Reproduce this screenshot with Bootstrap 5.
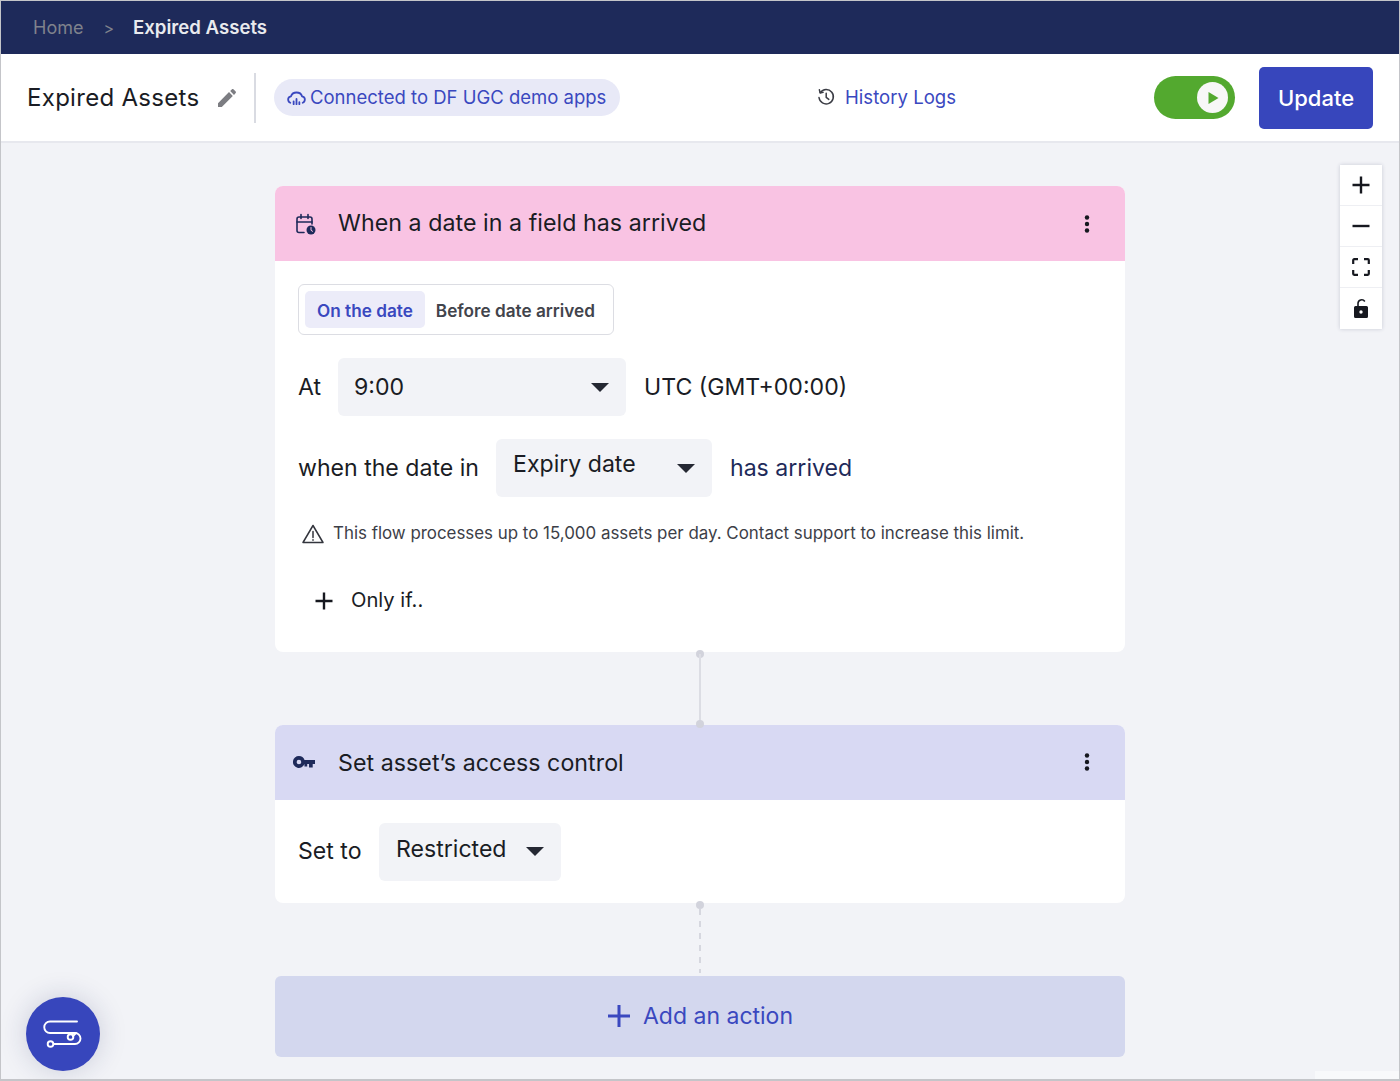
<!DOCTYPE html>
<html lang="en">
<head>
    <meta charset="UTF-8">
    <meta name="viewport" content="width=device-width, initial-scale=1.0">
    <title>Expired Assets</title>
    <link href="https://cdn.jsdelivr.net/npm/bootstrap@5.3.0/dist/css/bootstrap.min.css" rel="stylesheet">
    <style>
        html, body { height: 100%; overflow: hidden; }
        body { font-family: Inter, "Liberation Sans", sans-serif; background: #f2f3f7; color: #1a1c24; }

        .app-frame { position: relative; width: 1400px; height: 1081px; border: 1px solid #c4c5c9; border-bottom-width: 2px; background: #f2f3f7; overflow: hidden; }

        .crumb-bar { height: 53px; background: #1e2a5a; padding: 0 32px; font-size: 18px; }
        .crumb-home { color: #7f828c; }
        .crumb-sep { color: #7f828c; margin: 0 19px 0 20px; font-size: 16px; }
        .crumb-current { color: #e9eaee; font-weight: 600; font-size: 18.6px; }

        .head-bar { height: 89px; background: #fff; border-bottom: 2px solid #e7e8ee; padding-left: 26px; padding-right: 26px; }
        .flow-title { font-size: 24px; line-height: 1; letter-spacing: .3px; width: 184px; white-space: nowrap; padding-top: 1px; }
        .head-divider { width: 2px; height: 50px; background: #d9dbe2; margin: 0 18px 0 15px; }
        .conn-pill { height: 37px; width: 346px; border-radius: 19px; background: #e8e9f7; color: #3a48bf; font-size: 18.5px; padding-left: 13px; white-space: nowrap; }
        .hist-link { color: #3a48bf; font-size: 18.6px; margin-left: 196px; white-space: nowrap; }
        .play-toggle { width: 81px; height: 43px; border-radius: 22px; background: #53a92f; margin-left: auto; padding-right: 7px; }
        .play-knob { width: 31px; height: 31px; border-radius: 50%; background: #f7f7f7; }
        .update-btn { width: 114px; height: 62px; margin-left: 24px; padding-top: 8px; border-radius: 5px; background: #3746bc; border: 0; color: #fff; font-size: 22px; font-weight: 500; }
        .update-btn:hover { background: #3746bc; color: #fff; }

        .flow-canvas { width: 850px; margin: 43px auto 0; }
        .flow-card { background: #fff; border-radius: 8px; overflow: hidden; }
        .flow-head { height: 75px; padding: 0 35px 0 18px; font-size: 23.2px; letter-spacing: .05px; }
        .flow-head-icon { width: 26px; margin-right: 19px; color: #1e2a5a; }
        .head-pink { background: #f9c3e3; }
        .head-lilac { background: #d8d9f3; }

        .date-tabs { width: 316px; height: 51px; border: 1px solid #dcdde3; border-radius: 6px; padding: 6px; font-size: 17.2px; font-weight: 500; white-space: nowrap; }
        .tab-on { background: #ececf9; color: #3a48bf; border-radius: 5px; padding: 2px 12px 0; font-weight: 600; }
        .tab-off { color: #42444c; padding: 2px 11px 0; font-weight: 600; }

        .field-row { font-size: 23.1px; line-height: 1; white-space: nowrap; }
        .field-pick { height: 58px; background: #f2f3f7; border-radius: 6px; padding: 0 17px 0 16px; }
        .txt-nudge { padding-top: 2px; }
        .caret-down { width: 0; height: 0; border-left: 9px solid transparent; border-right: 9px solid transparent; border-top: 9px solid #252833; }
        .arrived-txt { color: #1e2a5a; }
        .limit-note { font-size: 16.9px; color: #3c3e47; white-space: nowrap; }
        .only-if { font-size: 20.2px; white-space: nowrap; }

        .link-gap { height: 73px; position: relative; }
        .link-line { position: absolute; left: 424px; top: 2px; width: 2px; height: 70px; background: #dcdde4; }
        .link-dashed { background: repeating-linear-gradient(#d6d7df 0 6px, transparent 6px 12px); }
        .link-dot { position: absolute; left: 421px; width: 8px; height: 8px; border-radius: 50%; background: #d2d3dc; }

        .add-action { height: 81px; background: #d3d7ee; border-radius: 6px; color: #3a48bf; font-size: 23px; }

        .zoom-tools { position: absolute; top: 164px; right: 17px; width: 42px; background: #fff; box-shadow: 0 0 4px rgba(30, 40, 80, .2); }
        .zoom-tool { height: 41px; border-bottom: 1px solid #eeeff3; }
        .zoom-tool:last-child { border-bottom: 0; }

        .fab-round { position: absolute; left: 25px; top: 996px; width: 74px; height: 74px; border-radius: 50%; background: #3746bc; box-shadow: 0 0 28px rgba(30, 40, 90, .18); }
        .corner-patch { position: absolute; right: 0; bottom: 0; width: 84px; height: 8px; background: #f8f9fb; }
    </style>
</head>
<body>
    <div class="app-frame">
        <!-- Breadcrumb -->
        <div class="crumb-bar d-flex align-items-center">
            <span class="crumb-home">Home</span>
            <span class="crumb-sep">&gt;</span>
            <span class="crumb-current">Expired Assets</span>
        </div>

        <!-- Flow header -->
        <div class="head-bar d-flex align-items-center">
            <span class="flow-title">Expired Assets</span>
            <svg class="ms-1" width="24" height="24" viewBox="0 0 24 24" fill="#7c7d82"><path d="M3 17.2V21h3.800L17.800 9.900l-3.800-3.800zM20.700 7c.4-.4.4-1 0-1.400l-2.300-2.300c-.4-.4-1-.4-1.400 0l-1.800 1.800 3.800 3.800z"/></svg>
            <span class="head-divider"></span>
            <span class="conn-pill d-flex align-items-center gap-1">
                <svg width="19" height="16" viewBox="0 0 20 16" fill="none" stroke="#3a48bf" stroke-width="1.900" stroke-linecap="round"><path d="M3.500 13C2 12.500 1.200 11 1.200 9.400c0-1.700 1.300-3 3-3.200C5 3.800 7.200 2.200 10 2.200c3 0 5.200 1.900 5.800 4 1.700.2 3 1.400 3 3.200 0 1.600-.8 3.100-2.300 3.600"/><path d="M7 14.500v-3M10 14.500V9M13 14.500v-2"/></svg>
                Connected to DF UGC demo apps
            </span>
            <span class="hist-link d-flex align-items-center">
                <svg style="margin-right: 9px" width="20" height="20" viewBox="0 0 20 20" fill="none" stroke="#3a3c44" stroke-width="1.500" stroke-linecap="round" stroke-linejoin="round"><path d="M4.300 5.500A7.200 7.200 0 1 1 3 10.500"/><path d="M3.400 2.800l.7 3.100 3-.6"/><path d="M10.200 6.200v4.200l2.600 2"/></svg>
                History Logs
            </span>
            <span class="play-toggle d-flex align-items-center justify-content-end">
                <span class="play-knob d-flex align-items-center justify-content-center">
                    <svg width="12" height="14" viewBox="0 0 12 14" fill="#53a92f"><path d="M1.500 1v12L11.500 7z"/></svg>
                </span>
            </span>
            <button class="btn update-btn" type="button">Update</button>
        </div>

        <!-- Flow canvas -->
        <div class="flow-canvas">
            <div class="flow-card">
                <div class="flow-head head-pink d-flex align-items-center">
                    <span class="flow-head-icon d-flex">
                        <svg width="24" height="24" viewBox="0 0 24 24" fill="none" stroke="#1e2a5a" stroke-width="1.600" stroke-linecap="round"><path d="M11 20.500H6a2 2 0 0 1-2-2V7a2 2 0 0 1 2-2h11a2 2 0 0 1 2 2v5"/><path d="M4 10h15M8 2.500v4M15 2.500v4"/><circle cx="18" cy="18" r="4.500" fill="#1e2a5a" stroke="none"/><path d="M18 15.500v2.800l1.600 1" stroke="#f9c3e3" stroke-width="1"/></svg>
                    </span>
                    <span class="flex-grow-1">When a date in a field has arrived</span>
                    <svg width="6" height="18" viewBox="0 0 6 18" fill="#16181f"><circle cx="3" cy="2.500" r="2.200"/><circle cx="3" cy="9" r="2.200"/><circle cx="3" cy="15.500" r="2.200"/></svg>
                </div>
                <div class="flow-body">
                    <div class="date-tabs d-flex align-items-stretch" style="margin: 23px 0 0 23px">
                        <span class="tab-on d-flex align-items-center">On the date</span>
                        <span class="tab-off d-flex align-items-center">Before date arrived</span>
                    </div>
                    <div class="field-row d-flex align-items-center" style="margin: 23px 0 0 23px">
                        <span class="txt-nudge" style="width: 40px">At</span>
                        <span class="field-pick d-flex align-items-center justify-content-between" style="width: 288px"><span class="txt-nudge">9:00</span><span class="caret-down"></span></span>
                        <span class="txt-nudge" style="margin-left: 18px">UTC (GMT+00:00)</span>
                    </div>
                    <div class="field-row d-flex align-items-center" style="margin: 23px 0 0 23px">
                        <span class="txt-nudge" style="width: 198px">when the date in</span>
                        <span class="field-pick d-flex align-items-center justify-content-between" style="padding-left: 17px; width: 216px"><span style="margin-top: -6px">Expiry date</span><span class="caret-down"></span></span>
                        <span class="arrived-txt txt-nudge" style="margin-left: 18px">has arrived</span>
                    </div>
                    <div class="limit-note d-flex align-items-center" style="margin: 24px 0 0 26px">
                        <svg width="24" height="22" viewBox="0 0 24 22" fill="none" stroke="#33353d" stroke-width="1.500" stroke-linejoin="round" stroke-linecap="round" style="margin-right: 8px"><path d="M12 2.500 22 19.500H2z"/><path d="M12 8.500v6M12 16.800v.5"/></svg>
                        This flow processes up to 15,000 assets per day. Contact support to increase this limit.
                    </div>
                    <div class="only-if d-flex align-items-center" style="margin: 39px 0 0 39px; padding-bottom: 36px">
                        <svg width="20" height="20" viewBox="0 0 20 20" stroke="#16181f" stroke-width="2.400" style="margin-right: 17px"><path d="M10 1.500v17M1.500 10h17"/></svg>
                        Only if..
                    </div>
                </div>
            </div>

            <div class="link-gap">
                <span class="link-dot" style="top: -2px"></span>
                <span class="link-line"></span>
                <span class="link-dot" style="top: 68px"></span>
            </div>

            <div class="flow-card">
                <div class="flow-head head-lilac d-flex align-items-center">
                    <span class="flow-head-icon d-flex">
                        <svg width="22" height="14" viewBox="0 0 24 14" fill="#1e2a5a"><path fill-rule="evenodd" d="M6.500 .5a6.500 6.500 0 0 1 6.100 4.300H24v4.500h-2.500V13h-4V9.300h-2v2.700h-3V9.300A6.500 6.500 0 1 1 6.500 .5zm0 4a2.500 2.500 0 1 0 0 5 2.500 2.500 0 0 0 0-5z"/></svg>
                    </span>
                    <span class="flex-grow-1 txt-nudge">Set asset’s access control</span>
                    <svg width="6" height="18" viewBox="0 0 6 18" fill="#16181f"><circle cx="3" cy="2.500" r="2.200"/><circle cx="3" cy="9" r="2.200"/><circle cx="3" cy="15.500" r="2.200"/></svg>
                </div>
                <div class="field-row d-flex align-items-center" style="padding: 23px 0 22px 23px">
                    <span style="width: 81px">Set to</span>
                    <span class="field-pick d-flex align-items-center justify-content-between" style="padding-left: 17px; width: 182px"><span style="margin-top: -4px">Restricted</span><span class="caret-down"></span></span>
                </div>
            </div>

            <div class="link-gap">
                <span class="link-dot" style="top: -2px"></span>
                <span class="link-line link-dashed" style="top: 6px; height: 64px"></span>
            </div>

            <div class="add-action d-flex align-items-center justify-content-center">
                <svg width="24" height="24" viewBox="0 0 24 24" stroke="#3a48bf" stroke-width="3" style="margin-right: 12px"><path d="M12 1v22M1 12h22"/></svg>
                Add an action
            </div>
        </div>

        <!-- Zoom controls -->
        <div class="zoom-tools">
            <div class="zoom-tool d-flex align-items-center justify-content-center">
                <svg width="20" height="20" viewBox="0 0 20 20" stroke="#16181f" stroke-width="2.400"><path d="M10 1.500v17M1.500 10h17"/></svg>
            </div>
            <div class="zoom-tool d-flex align-items-center justify-content-center">
                <svg width="20" height="20" viewBox="0 0 20 20" stroke="#16181f" stroke-width="2.400"><path d="M1.500 10h17"/></svg>
            </div>
            <div class="zoom-tool d-flex align-items-center justify-content-center">
                <svg width="18" height="18" viewBox="0 0 18 18" fill="none" stroke="#16181f" stroke-width="2.200"><path d="M1.200 6V2.200a1 1 0 0 1 1-1H6M12 1.200h3.800a1 1 0 0 1 1 1V6M16.800 12v3.800a1 1 0 0 1-1 1H12M6 16.800H2.200a1 1 0 0 1-1-1V12"/></svg>
            </div>
            <div class="zoom-tool d-flex align-items-center justify-content-center">
                <svg width="16" height="21" viewBox="0 0 16 21"><path d="M5 8V5.500A3.700 3.700 0 0 1 11.800 3.500" fill="none" stroke="#16181f" stroke-width="1.600"/><path fill="#16181f" fill-rule="evenodd" d="M2.500 8h11A1.500 1.500 0 0 1 15 9.500v9a1.500 1.500 0 0 1-1.500 1.500h-11A1.500 1.500 0 0 1 1 18.500v-9A1.500 1.500 0 0 1 2.500 8zm5.500 4.300a1.700 1.700 0 1 0 0 3.400 1.700 1.700 0 0 0 0-3.400z"/></svg>
            </div>
        </div>

        <!-- Floating button -->
        <div class="fab-round d-flex align-items-center justify-content-center">
            <svg width="40" height="28" viewBox="2 0 40 28" fill="none" stroke="#fff" stroke-width="1.900" stroke-linecap="round"><path d="M36 1.500H9a5.700 5.700 0 0 0 0 11.500h25a5.500 5.500 0 0 1 0 11H12"/><circle cx="29.500" cy="17" r="2.800" fill="#3746bc"/><path d="M32 16l3-3"/><circle cx="9.500" cy="24" r="2.800" fill="#3746bc"/></svg>
        </div>

        <div class="corner-patch"></div>
    </div>

    <script src="https://cdn.jsdelivr.net/npm/bootstrap@5.3.0/dist/js/bootstrap.bundle.min.js"></script>
</body>
</html>
